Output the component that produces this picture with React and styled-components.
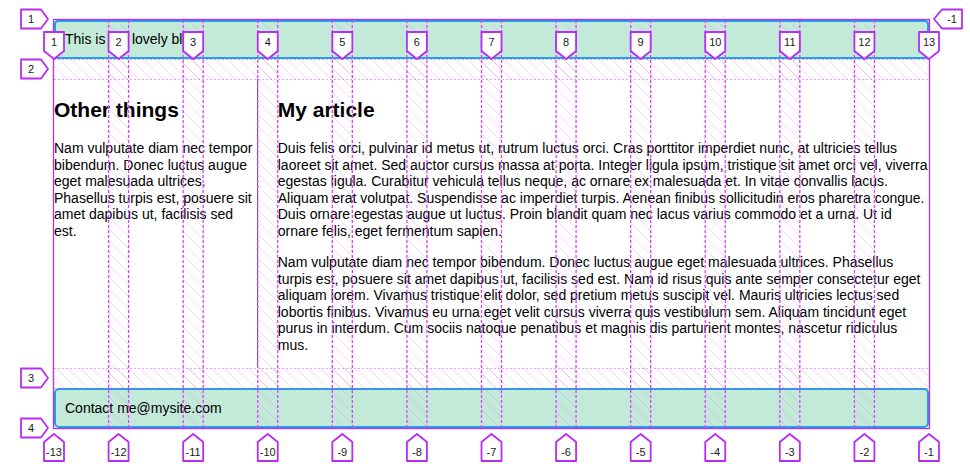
import React from "react";
import styled, { createGlobalStyle } from "styled-components";

const GlobalStyle = createGlobalStyle`
  html, body {
    margin: 0;
    background: #fff;
  }
  body {
    font-family: "Liberation Sans", Arial, Helvetica, sans-serif;
    font-size: 14px;
    color: #000;
  }
`;

// grid geometry, used by the inspector overlay
const X0 = 54;
const X1 = 929;
const GAP = 20;
const COL_W = (X1 - X0 - 11 * GAP) / 12;
const ROWS = [20, 59, 79, 368, 388, 428];

const colStart = i => X0 + i * (COL_W + GAP);

const PURPLE = "#b92cf0";
const MAGENTA = "#e23cff";

const Page = styled.div`
  position: relative;
  width: 970px;
  height: 470px;
  padding: 20px 41px 0 54px;
  box-sizing: border-box;
`;

const Layout = styled.div`
  display: grid;
  grid-template-columns: repeat(12, 1fr);
  grid-template-rows: 39px 289px 40px;
  gap: 20px;
  width: 875px;
`;

const Banner = styled.header`
  grid-column: 1 / -1;
  display: flex;
  align-items: center;
  padding: 0 9px;
  background: #c3e9d9;
  border: 2px solid #1ea3e6;
  border-radius: 4px;
  line-height: 17px;
`;

const Footer = styled(Banner).attrs({ as: "footer" })`
  border-radius: 5px;
`;

const Aside = styled.aside`
  grid-column: 1 / 4;
  border-right: 1px solid #5b5b5b;
  overflow: hidden;
`;

const Article = styled.article`
  grid-column: 4 / 13;
`;

const Title = styled.h1`
  font-size: 21px;
  line-height: 24px;
  margin: 19px 0 18px;
`;

const Para = styled.p`
  line-height: 16.5px;
  margin: 0 0 15px;
`;

const Overlay = styled.svg`
  position: absolute;
  top: 0;
  left: 0;
  pointer-events: none;
`;

const LabelText = styled.text`
  font-family: "Liberation Sans", Arial, sans-serif;
  font-size: 11px;
  fill: #1a1a1a;
`;

function Label({ shape, x, y, text }) {
  let pts;
  let tx = x;
  let ty = y;
  if (shape === "down") {
    pts = `${x - 10},32 ${x + 10},32 ${x + 10},51 ${x},59 ${x - 10},51`;
    ty = 46;
  } else if (shape === "up") {
    pts = `${x},434 ${x + 10},442 ${x + 10},461 ${x - 10},461 ${x - 10},442`;
    ty = 456;
  } else if (shape === "right") {
    pts = `21,${y - 9.5} 41,${y - 9.5} 48,${y} 41,${y + 9.5} 21,${y + 9.5}`;
    tx = 31;
    ty = y + 4;
  } else {
    pts = `934,${y} 942,${y - 9.5} 962,${y - 9.5} 962,${y + 9.5} 942,${y + 9.5}`;
    tx = 952;
    ty = y + 4;
  }
  return (
    <g>
      <polygon
        points={pts}
        fill="#fff"
        stroke={PURPLE}
        strokeWidth="1.8"
        strokeLinejoin="round"
      />
      <LabelText x={tx} y={ty} textAnchor="middle">
        {text}
      </LabelText>
    </g>
  );
}

function GridInspector() {
  const gaps = [];
  for (let k = 1; k < 12; k++) {
    gaps.push([colStart(k - 1) + COL_W, colStart(k)]);
  }
  const lineX = [X0, ...gaps.map(g => (g[0] + g[1]) / 2), X1];
  const rowLabelY = [19, 69, 378, 428];
  const top = ROWS[0];
  const bottom = ROWS[ROWS.length - 1];

  return (
    <Overlay width="970" height="470" viewBox="0 0 970 470">
      <defs>
        <pattern id="hatch" width="12" height="12" patternUnits="userSpaceOnUse">
          <path
            d="M0 0 L12 12 M-6 6 L6 18 M6 -6 L18 6"
            stroke="rgba(226,90,255,0.25)"
            strokeWidth="1"
          />
        </pattern>
      </defs>

      {gaps.map(([a, b], i) => (
        <rect key={"cg" + i} x={a} y={top} width={b - a} height={bottom - top} fill="url(#hatch)" />
      ))}
      <rect x={X0} y={59} width={X1 - X0} height={20} fill="url(#hatch)" />
      <rect x={X0} y={368} width={X1 - X0} height={20} fill="url(#hatch)" />

      {[59, 79, 368, 388].map(y => (
        <line
          key={"h" + y}
          x1={X0}
          x2={X1}
          y1={y + 0.5}
          y2={y + 0.5}
          stroke="rgba(226,60,255,0.5)"
          strokeDasharray="2 2"
        />
      ))}

      {gaps.map(([a, b], i) => (
        <g key={"cl" + i}>
          <line x1={a} x2={a} y1={top} y2={bottom} stroke={MAGENTA} strokeWidth="1.3" strokeDasharray="3 2" />
          <line x1={b} x2={b} y1={top} y2={bottom} stroke={MAGENTA} strokeWidth="1.3" strokeDasharray="3 2" />
        </g>
      ))}

      <rect
        x={X0 - 0.5}
        y={top - 0.5}
        width={X1 - X0 + 1}
        height={bottom - top + 1}
        fill="none"
        stroke={PURPLE}
        strokeWidth="1.3"
      />

      {rowLabelY.map((y, i) => (
        <Label key={"r" + i} shape="right" y={y} text={String(i + 1)} />
      ))}
      <Label shape="left" y={19} text="-1" />

      {lineX.map((x, i) => (
        <Label key={"t" + i} shape="down" x={x} text={String(i + 1)} />
      ))}
      {lineX.map((x, i) => (
        <Label key={"b" + i} shape="up" x={x} text={String(i - 13)} />
      ))}
    </Overlay>
  );
}

export default function App() {
  return (
    <Page>
      <GlobalStyle />
      <Layout>
        <Banner>This is my lovely blog</Banner>
        <Aside>
          <Title>Other things</Title>
          <Para>
            Nam vulputate diam nec tempor bibendum. Donec luctus augue eget
            malesuada ultrices. Phasellus turpis est, posuere sit amet dapibus
            ut, facilisis sed est.
          </Para>
        </Aside>
        <Article>
          <Title>My article</Title>
          <Para>
            Duis felis orci, pulvinar id metus ut, rutrum luctus orci. Cras
            porttitor imperdiet nunc, at ultricies tellus laoreet sit amet. Sed
            auctor cursus massa at porta. Integer ligula ipsum, tristique sit
            amet orci vel, viverra egestas ligula. Curabitur vehicula tellus
            neque, ac ornare ex malesuada et. In vitae convallis lacus. Aliquam
            erat volutpat. Suspendisse ac imperdiet turpis. Aenean finibus
            sollicitudin eros pharetra congue. Duis ornare egestas augue ut
            luctus. Proin blandit quam nec lacus varius commodo et a urna. Ut id
            ornare felis, eget fermentum sapien.
          </Para>
          <Para>
            Nam vulputate diam nec tempor bibendum. Donec luctus augue eget
            malesuada ultrices. Phasellus turpis est, posuere sit amet dapibus
            ut, facilisis sed est. Nam id risus quis ante semper consectetur
            eget aliquam lorem. Vivamus tristique elit dolor, sed pretium metus
            suscipit vel. Mauris ultricies lectus sed lobortis finibus. Vivamus
            eu urna eget velit cursus viverra quis vestibulum sem. Aliquam
            tincidunt eget purus in interdum. Cum sociis natoque penatibus et
            magnis dis parturient montes, nascetur ridiculus mus.
          </Para>
        </Article>
        <Footer>Contact me@mysite.com</Footer>
      </Layout>
      <GridInspector />
    </Page>
  );
}
